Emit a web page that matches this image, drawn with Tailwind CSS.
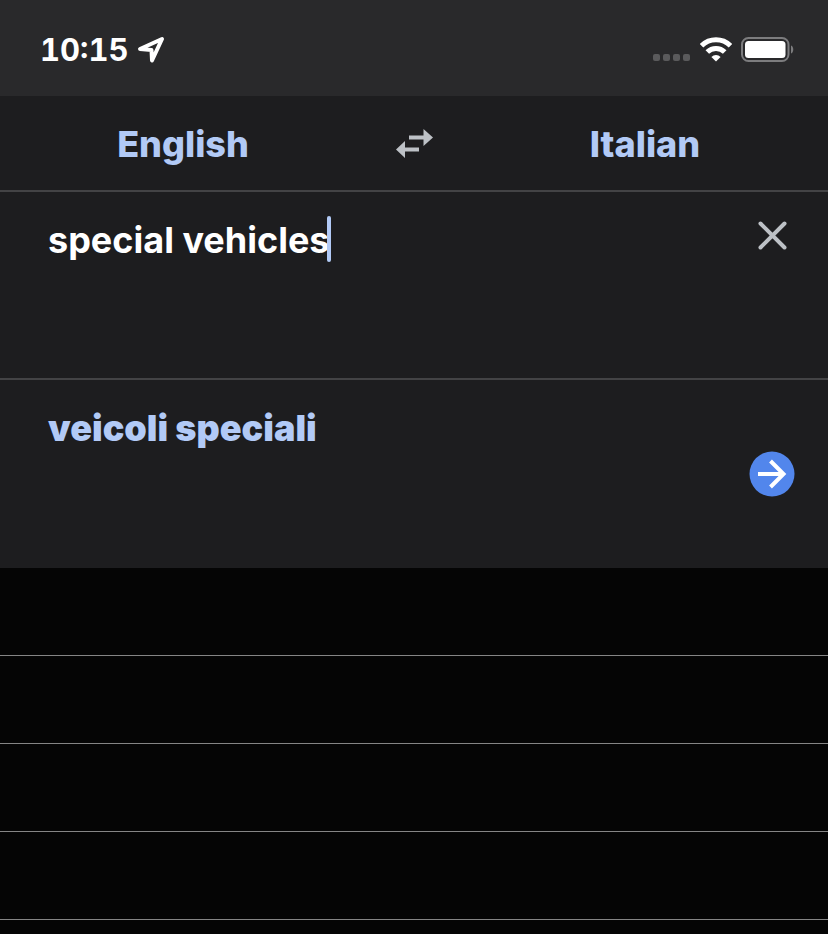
<!DOCTYPE html>
<html lang="en">
<head>
    <meta charset="UTF-8">
    <meta name="viewport" content="width=device-width, initial-scale=1.0">
    <title>Translate</title>
    <script src="https://cdn.jsdelivr.net/npm/@tailwindcss/browser@4"></script>
</head>
<body class="min-h-screen bg-[#050505] font-['Inter',sans-serif] text-white">
    <!-- Status Bar -->
    <header class="flex h-24 items-center justify-between bg-[#29292b] pl-10 pr-8">
        <div class="flex items-center gap-2 pt-1">
            <span class="text-[31px] leading-10 font-bold tabular-nums">10:15</span>
            <svg class="h-7 w-7" viewBox="0 0 28 28" fill="none" stroke="#fff" stroke-width="4" stroke-linejoin="round" aria-hidden="true">
                <path d="M3 13 25 3 15 24.500 14.500 14Z"/>
            </svg>
        </div>
        <div class="flex items-center gap-2 pt-1">
            <svg class="h-7 w-10" viewBox="0 0 40 28" fill="#5a5a5c" aria-hidden="true">
                <rect x="1" y="18" width="7" height="7" rx="2"/>
                <rect x="11" y="18" width="7" height="7" rx="2"/>
                <rect x="21" y="18" width="7" height="7" rx="2"/>
                <rect x="31" y="18" width="7" height="7" rx="2"/>
            </svg>
            <svg class="h-7 w-8" viewBox="0 0 32 28" fill="none" stroke="#fff" stroke-width="5" aria-hidden="true">
                <path d="M1.500 9.800a20.500 20.500 0 0 1 29 0"/>
                <path d="M7.300 16a12.300 12.300 0 0 1 17.400 0"/>
                <path d="M16 25.500l-4.600-4.500a6.500 6.500 0 0 1 9.200 0z" fill="#fff" stroke="none"/>
            </svg>
            <svg class="h-7 w-14" viewBox="0 0 56 28" aria-hidden="true">
                <rect x="2" y="2" width="46.500" height="23" rx="6.500" fill="none" stroke="#7c7c7e" stroke-width="2"/>
                <rect x="5" y="5" width="40.500" height="17" rx="3.500" fill="#fff"/>
                <path d="M51 9.500c3 1 3 7 0 8z" fill="#7c7c7e"/>
            </svg>
        </div>
    </header>

    <main>
        <!-- Languages -->
        <nav class="grid h-24 grid-cols-[1fr_96px_1fr] items-center border-b-2 border-[#434345] bg-[#1d1d1f] text-4xl font-extrabold text-[#b2caf6]">
            <button type="button" class="h-full pt-0.5">English</button>
            <button type="button" class="flex h-full items-center justify-center" aria-label="Swap languages">
                <svg class="h-9 w-10" viewBox="0 0 40 36" fill="#bdc1c6">
                    <path d="M15 10.500h14.500V4L39 12.500 29.500 21v-6.500H15z"/>
                    <path d="M25 22.500H11V16L2 24.500 11 33v-6.500h14z"/>
                </svg>
            </button>
            <button type="button" class="h-full pt-0.5">Italian</button>
        </nav>

        <!-- Source Text -->
        <section class="flex h-[188px] items-start justify-between border-b-2 border-[#434345] bg-[#1d1d1f] pl-12 pr-8 pt-6">
            <div class="relative h-full flex-1">
                <textarea aria-label="Text to translate" spellcheck="false" class="block h-full w-full resize-none bg-transparent text-4xl leading-12 font-bold outline-none">special vehicles</textarea>
                <span class="absolute top-0 left-[279px] h-[46px] w-1 rounded-sm bg-[#b2caf6]"></span>
            </div>
            <button type="button" class="flex h-10 w-12 items-center justify-center" aria-label="Clear text">
                <svg class="h-8 w-8" viewBox="0 0 32 32" fill="none" stroke="#bdc1c6" stroke-width="4" stroke-linecap="round">
                    <path d="M4.500 3.500l24 24M28.500 3.500l-24 24"/>
                </svg>
            </button>
        </section>

        <!-- Translation -->
        <section class="flex h-[188px] items-center justify-between bg-[#1d1d1f] pl-12 pr-8">
            <p class="self-start pt-6 text-4xl leading-12 font-black text-[#b2caf6]">veicoli speciali</p>
            <button type="button" class="flex h-12 w-12 items-center justify-center" aria-label="Open translation">
                <svg class="h-12 w-12" viewBox="0 0 48 48" fill="none" stroke="#fff" stroke-width="4">
                    <circle cx="24" cy="24" r="22.500" fill="#5286ec" stroke="none"/>
                    <path d="M10 24h26M22.500 11 35.500 24 22.500 37"/>
                </svg>
            </button>
        </section>

        <!-- History -->
        <ul>
            <li class="h-22 border-b border-[#858585]"></li>
            <li class="h-22 border-b border-[#858585]"></li>
            <li class="h-22 border-b border-[#858585]"></li>
            <li class="h-22 border-b border-[#858585]"></li>
        </ul>
    </main>
</body>
</html>
